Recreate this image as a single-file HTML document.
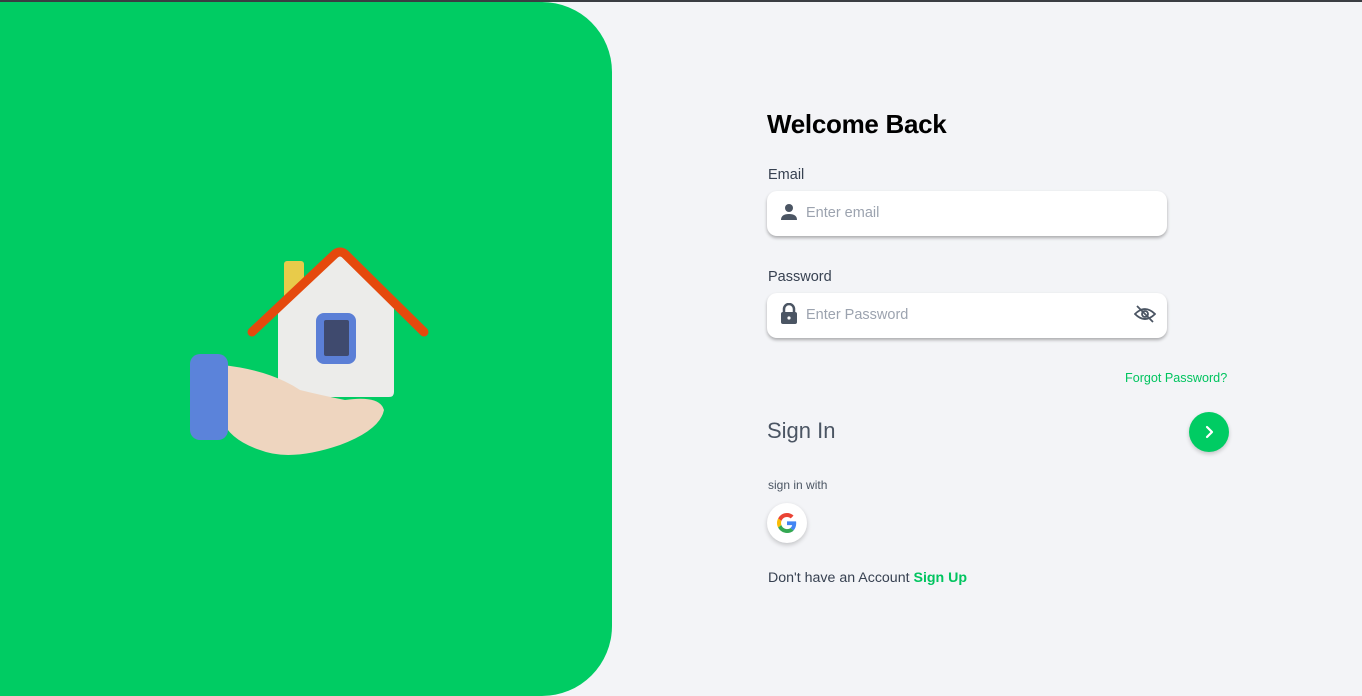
<!DOCTYPE html>
<html><head><style>
*{margin:0;padding:0;box-sizing:border-box}
body{width:1362px;height:696px;overflow:hidden;background:#f3f4f7;font-family:"Liberation Sans",sans-serif;position:relative}
.top{position:absolute;left:0;top:0;width:1362px;height:2px;background:#3a3d42}
.green{position:absolute;left:0;top:2px;width:612px;height:694px;background:#00cc63;border-radius:0 70px 70px 0}
.t{position:absolute;color:#374151}
.inp{position:absolute;left:767px;width:400px;height:45px;background:#fff;border-radius:10px;box-shadow:0 2px 3px rgba(0,0,0,.3)}
.ph{position:absolute;left:39px;top:14px;font-size:14.5px;color:#9ca3af}
</style></head><body>
<div class="top"></div>
<div class="green">
<svg width="612" height="694" style="position:absolute;left:0;top:-2px">
<rect x="284" y="261" width="20" height="40" rx="3" fill="#e8cb4a"/>
<path d="M278 306 L338 250 L394 304 L394 392 Q394 397 389 397 L283 397 Q278 397 278 392Z" fill="#ececea"/>
<path d="M252 332 L335 254 Q340 250 345 254 L424 332" fill="none" stroke="#e5490d" stroke-width="9" stroke-linecap="round" stroke-linejoin="round"/>
<rect x="316" y="313" width="40" height="51" rx="8" fill="#5b7fd6"/>
<rect x="324" y="320" width="25" height="36" rx="2" fill="#3f4a6e"/>
<path d="M222 365 Q270 370 300 390 Q320 395 345 400 Q380 395 384 410 Q380 430 340 445 Q290 462 260 450 Q230 440 222 420Z" fill="#eed5bf"/>
<rect x="190" y="354" width="38" height="86" rx="10" fill="#5b83da"/>
</svg>
</div>
<div class="t" style="left:767px;top:109px;font-size:26px;font-weight:bold;color:#000;letter-spacing:-0.3px">Welcome Back</div>
<div class="t" style="left:768px;top:167px;font-size:14.5px">Email</div>
<div class="inp" style="top:191px">
<svg width="18" height="18" style="position:absolute;left:13px;top:12px" viewBox="0 0 18 18"><circle cx="9" cy="5" r="4" fill="#4b5563"/><path d="M1 17 Q1 11 9 11 Q17 11 17 17Z" fill="#4b5563"/></svg>
<div class="ph">Enter email</div></div>
<div class="t" style="left:768px;top:269px;font-size:14.5px">Password</div>
<div class="inp" style="top:293px">
<svg width="18" height="22" style="position:absolute;left:13px;top:10px" viewBox="0 0 18 22"><path d="M4 10 V6 A5 5 0 0 1 14 6 V10" fill="none" stroke="#4b5563" stroke-width="2.5"/><rect x="1" y="9" width="16" height="12" rx="2" fill="#4b5563"/><circle cx="9" cy="15" r="1.6" fill="#fff"/></svg>
<div class="ph">Enter Password</div>
<svg width="22" height="18" style="position:absolute;left:367px;top:12px" viewBox="0 0 22 18"><path d="M1 9 Q11 -1 21 9 Q11 19 1 9Z" fill="none" stroke="#4b5563" stroke-width="1.8"/><circle cx="11" cy="9" r="3" fill="none" stroke="#4b5563" stroke-width="1.8"/><line x1="3" y1="1" x2="19" y2="17" stroke="#4b5563" stroke-width="1.8"/></svg>
</div>
<div class="t" style="left:1125px;top:371px;font-size:12.6px;color:#00c45f">Forgot Password?</div>
<div class="t" style="left:767px;top:418px;font-size:22px;color:#4b5563">Sign In</div>
<div style="position:absolute;left:1189px;top:412px;width:40px;height:40px;border-radius:50%;background:#00cc63;box-shadow:0 2px 4px rgba(0,0,0,.2)"><svg width="40" height="40"><path d="M18 15 L23 20 L18 25" fill="none" stroke="#fff" stroke-width="2.2" stroke-linecap="round" stroke-linejoin="round"/></svg></div>
<div class="t" style="left:768px;top:478px;font-size:12px;color:#4b5563">sign in with</div>
<div style="position:absolute;left:767px;top:503px;width:40px;height:40px;border-radius:50%;background:#fff;box-shadow:0 2px 5px rgba(0,0,0,.2)">
<svg width="20" height="20" viewBox="0 0 48 48" style="position:absolute;left:10px;top:10px"><path fill="#EA4335" d="M24 9.5c3.5 0 6.6 1.2 9 3.5l6.7-6.7C35.6 2.4 30.2 0 24 0 14.6 0 6.6 5.4 2.7 13.2l7.8 6.1C12.4 13.6 17.7 9.5 24 9.5z"/><path fill="#4285F4" d="M46.1 24.5c0-1.6-.1-3.1-.4-4.5H24v9h12.4c-.5 2.9-2.2 5.4-4.7 7l7.6 5.9c4.4-4.1 6.8-10.1 6.8-17.4z"/><path fill="#FBBC05" d="M10.5 28.7c-.5-1.5-.8-3-.8-4.7s.3-3.2.8-4.7l-7.8-6.1C1 16.5 0 20.1 0 24s1 7.5 2.7 10.8l7.8-6.1z"/><path fill="#34A853" d="M24 48c6.5 0 11.9-2.1 15.9-5.8l-7.6-5.9c-2.1 1.4-4.9 2.3-8.3 2.3-6.3 0-11.6-4.1-13.5-9.8l-7.8 6.1C6.6 42.6 14.6 48 24 48z"/></svg></div>
<div class="t" style="left:768px;top:570px;font-size:14.2px">Don't have an Account <b style="color:#00c45f">Sign Up</b></div>
</body></html>
